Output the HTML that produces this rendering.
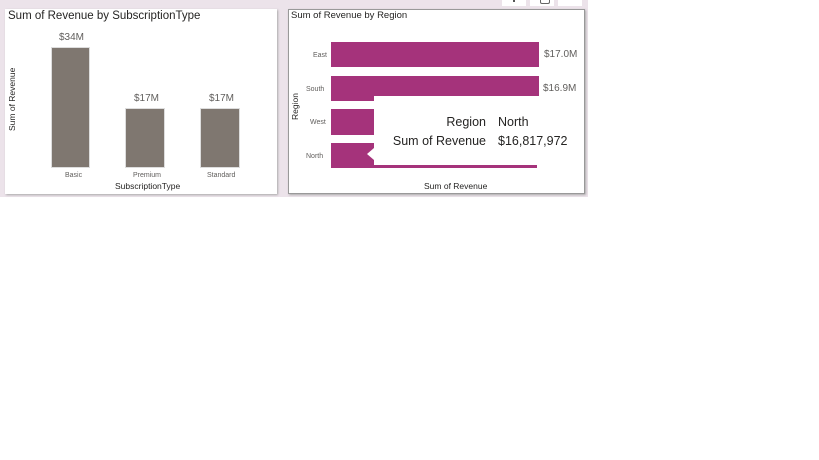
<!DOCTYPE html>
<html><head><style>
body{margin:0;width:819px;height:460px;background:#fff;position:relative;overflow:hidden;font-family:"Liberation Sans","DejaVu Sans",sans-serif;}
.a{position:absolute}
.t{position:absolute;white-space:nowrap;line-height:1}
</style></head><body>
<div class="a" style="left:0;top:0;width:588px;height:197px;background:#ece3ea"></div>
<div class="a" style="left:502px;top:0;width:24px;height:6px;background:#fff"></div>
<div class="a" style="left:530px;top:0;width:24px;height:6px;background:#fff"></div>
<div class="a" style="left:558px;top:0;width:24px;height:6px;background:#fff"></div>
<div class="a" style="left:540px;top:0;width:8px;height:3px;border:1px solid #666;border-top:none;border-radius:0 0 2px 2px"></div>
<div class="a" style="left:513px;top:0;width:2px;height:2px;background:#555"></div>
<div class="a" style="left:5px;top:9px;width:272px;height:185px;background:#fff;box-shadow:1px 1px 2px #aaa"></div>
<div class="t" style="left:8px;top:11px;font-size:11.5px;color:#252423">Sum of Revenue by SubscriptionType</div>
<div class="t" style="left:8px;top:131px;font-size:8.5px;color:#252423;transform:rotate(-90deg);transform-origin:0 0">Sum of Revenue</div>
<div class="a" style="left:51px;top:47px;width:39px;height:121px;background:#7f7770;border:1px solid #ddd;box-sizing:border-box"></div>
<div class="a" style="left:125px;top:108px;width:40px;height:60px;background:#7f7770;border:1px solid #ddd;box-sizing:border-box"></div>
<div class="a" style="left:200px;top:108px;width:40px;height:60px;background:#7f7770;border:1px solid #ddd;box-sizing:border-box"></div>
<div class="t" style="left:59px;top:33px;font-size:10px;color:#605e5c">$34M</div>
<div class="t" style="left:134px;top:94px;font-size:10px;color:#605e5c">$17M</div>
<div class="t" style="left:209px;top:94px;font-size:10px;color:#605e5c">$17M</div>
<div class="t" style="left:65px;top:172px;font-size:7px;color:#605e5c">Basic</div>
<div class="t" style="left:133px;top:172px;font-size:7px;color:#605e5c">Premium</div>
<div class="t" style="left:207px;top:172px;font-size:7px;color:#605e5c">Standard</div>
<div class="t" style="left:115px;top:182px;font-size:8.5px;color:#252423">SubscriptionType</div>
<div class="a" style="left:288px;top:9px;width:297px;height:185px;background:#fff;border:1px solid #999;box-sizing:border-box;box-shadow:1px 1px 2px #aaa"></div>
<div class="t" style="left:291px;top:11px;font-size:9.5px;color:#252423">Sum of Revenue by Region</div>
<div class="t" style="left:291px;top:120px;font-size:8.5px;color:#252423;transform:rotate(-90deg);transform-origin:0 0">Region</div>
<div class="a" style="left:331px;top:42px;width:208px;height:25px;background:#a5337b"></div>
<div class="a" style="left:331px;top:76px;width:208px;height:25px;background:#a5337b"></div>
<div class="a" style="left:331px;top:109px;width:208px;height:26px;background:#a5337b"></div>
<div class="a" style="left:331px;top:143px;width:206px;height:25px;background:#a5337b"></div>
<div class="t" style="left:313px;top:52px;font-size:7px;color:#605e5c">East</div>
<div class="t" style="left:306px;top:86px;font-size:7px;color:#605e5c">South</div>
<div class="t" style="left:310px;top:119px;font-size:7px;color:#605e5c">West</div>
<div class="t" style="left:306px;top:153px;font-size:7px;color:#605e5c">North</div>
<div class="t" style="left:544px;top:50px;font-size:10px;color:#605e5c">$17.0M</div>
<div class="t" style="left:543px;top:84px;font-size:10px;color:#605e5c">$16.9M</div>
<div class="t" style="left:424px;top:182px;font-size:8.5px;color:#252423">Sum of Revenue</div>
<div class="a" style="left:374px;top:96px;width:208px;height:69px;background:#fff"></div>
<div class="a" style="left:367px;top:148px;width:0;height:0;border-top:6px solid transparent;border-bottom:6px solid transparent;border-right:7px solid #fff"></div>
<div class="t" style="left:374px;top:116px;width:112px;text-align:right;font-size:12.5px;color:#252423">Region</div>
<div class="t" style="left:374px;top:135px;width:112px;text-align:right;font-size:12.5px;color:#252423">Sum of Revenue</div>
<div class="t" style="left:498px;top:116px;font-size:12.5px;color:#252423">North</div>
<div class="t" style="left:498px;top:135px;font-size:12.5px;color:#252423">$16,817,972</div>
</body></html>
